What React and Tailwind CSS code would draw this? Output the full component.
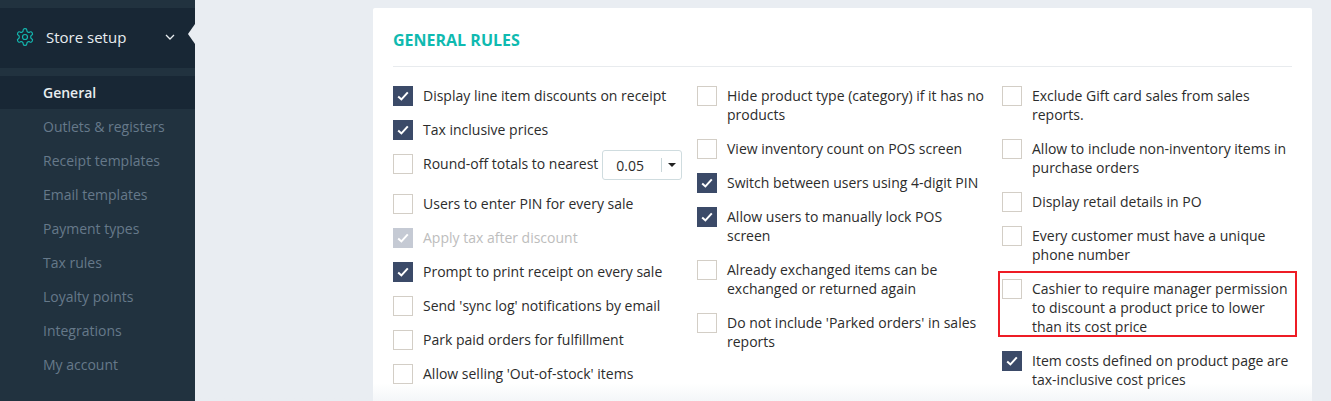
function Check() {
  return (
    <svg width="12" height="10" viewBox="0 0 12 10" fill="none">
      <path d="M1.2 5.4 L4.4 8.4 L10.8 1.4" stroke="#ffffff" strokeWidth="2" />
    </svg>
  );
}
function Item({ label, checked, disabled, className = "" }) {
  return (
    <div className={"flex items-start gap-[10px] " + className}>
      <div
        className={
          "w-5 h-5 shrink-0 flex items-center justify-center border " +
          (disabled
            ? "bg-[#c5cad4] border-[#c5cad4]"
            : checked
            ? "bg-[#3b4a68] border-[#3b4a68]"
            : "bg-white border-[#d3cec6]")
        }
      >
        {checked && <Check />}
      </div>
      <div className={"text-[14px] leading-[19px] pb-px " + (disabled ? "text-[#bdbdbd]" : "text-[#2c2c2c]")}>
        {label}
      </div>
    </div>
  );
}
const nav = ["Outlets & registers", "Receipt templates", "Email templates", "Payment types", "Tax rules", "Loyalty points", "Integrations", "My account"];
export default function App() {
  return (
    <div className="relative flex w-[1331px] h-[401px] overflow-hidden bg-[#e9edf2] font-['Open_Sans',sans-serif]">
      <aside className="w-[195px] shrink-0 bg-[#21323f] pt-2">
        <div className="relative h-[60px] bg-[#182735] flex items-center pl-[15px] pr-[19px] pb-[2px]">
          <svg width="20" height="20" viewBox="0 0 24 24" fill="none" stroke="#14b8b0" strokeWidth="1.4" strokeLinecap="round" strokeLinejoin="round" className="mr-[11px]">
            <path d="M12.22 2h-.44a2 2 0 0 0-2 2v.18a2 2 0 0 1-1 1.73l-.43.25a2 2 0 0 1-2 0l-.15-.08a2 2 0 0 0-2.73.73l-.22.38a2 2 0 0 0 .73 2.73l.15.1a2 2 0 0 1 1 1.72v.51a2 2 0 0 1-1 1.74l-.15.09a2 2 0 0 0-.73 2.73l.22.38a2 2 0 0 0 2.73.73l.15-.08a2 2 0 0 1 2 0l.43.25a2 2 0 0 1 1 1.73V20a2 2 0 0 0 2 2h.44a2 2 0 0 0 2-2v-.18a2 2 0 0 1 1-1.73l.43-.25a2 2 0 0 1 2 0l.15.08a2 2 0 0 0 2.73-.73l.22-.39a2 2 0 0 0-.73-2.73l-.15-.08a2 2 0 0 1-1-1.74v-.5a2 2 0 0 1 1-1.74l.15-.09a2 2 0 0 0 .73-2.73l-.22-.38a2 2 0 0 0-2.73-.73l-.15.08a2 2 0 0 1-2 0l-.43-.25a2 2 0 0 1-1-1.73V4a2 2 0 0 0-2-2z" />
            <circle cx="12" cy="12" r="3" />
          </svg>
          <span className="text-[15px] text-[#e8edf0] flex-1">Store setup</span>
          <svg width="10" height="7" viewBox="0 0 10 7" fill="none" stroke="#e8edf0" strokeWidth="1.3" className="-ml-[1px] mr-[1px]">
            <path d="M1 1 L5 5 L9 1" />
          </svg>
          <div className="absolute right-0 top-[16px] w-[7px] h-5 bg-[#e9edf2] [clip-path:polygon(100%_0,100%_100%,0_50%)]" />
        </div>
        <div className="h-[33px] mt-2 bg-[#182735] flex items-center pl-[43px] text-[14px] font-semibold text-[#e8edf0]">General</div>
        {nav.map((n) => (
          <div key={n} className="h-[34px] flex items-center pl-[43px] text-[14px] text-[#66798a]">{n}</div>
        ))}
      </aside>
      <main className="flex-1 pt-2 pl-[178px] pr-[19px]">
        <div className="bg-white rounded-[2px] h-[420px] px-[20px]">
          <div className="h-[59px] flex items-center pt-[6px] border-b border-[#e8ebee] text-[16px] font-bold text-[#0fbab0]">GENERAL RULES</div>
          <div className="flex pt-[19px]">
            <div className="w-[304px] flex flex-col">
              <Item checked label="Display line item discounts on receipt" />
              <Item checked label="Tax inclusive prices" className="mt-[14px]" />
              <div className="flex items-start gap-[10px] mt-[14px]">
                <div className="w-5 h-5 shrink-0 bg-white border border-[#d3cec6]" />
                <div className="text-[14px] leading-[19px] text-[#2c2c2c] whitespace-nowrap">Round-off totals to nearest</div>
                <div className="ml-[-6px] w-[80px] h-[30px] -mt-[4px] border border-[#cfdcdf] rounded-[3px] flex items-center text-[14px] text-[#2c2c2c] pl-[13px] bg-white">
                  <span className="w-[45px] pt-px">0.05</span>
                  <span className="w-px h-[14px] bg-[#c9d6d9]" />
                  <span className="ml-[6px] w-0 h-0 border-x-[4px] border-x-transparent border-t-[4px] border-t-[#222]" />
                </div>
              </div>
              <Item label="Users to enter PIN for every sale" className="mt-[14px]" />
              <Item checked disabled label="Apply tax after discount" className="mt-[14px]" />
              <Item checked label="Prompt to print receipt on every sale" className="mt-[14px]" />
              <Item label="Send 'sync log' notifications by email" className="mt-[14px]" />
              <Item label="Park paid orders for fulfillment" className="mt-[14px]" />
              <Item label="Allow selling 'Out-of-stock' items" className="mt-[14px]" />
            </div>
            <div className="w-[305px] flex flex-col gap-[14px] pr-[16px]">
              <Item label="Hide product type (category) if it has no products" />
              <Item label="View inventory count on POS screen" />
              <Item checked label="Switch between users using 4-digit PIN" />
              <Item checked label="Allow users to manually lock POS screen" />
              <Item label="Already exchanged items can be exchanged or returned again" />
              <Item label="Do not include 'Parked orders' in sales reports" />
            </div>
            <div className="w-[290px] flex flex-col gap-[14px]">
              <Item label="Exclude Gift card sales from sales reports." />
              <Item label="Allow to include non-inventory items in purchase orders" />
              <Item label="Display retail details in PO" />
              <Item label="Every customer must have a unique phone number" />
              <div className="relative">
                <Item label="Cashier to require manager permission to discount a product price to lower than its cost price" />
                <div className="absolute -left-[4px] -top-[8px] w-[299px] h-[66px] border-2 border-[#ee1c25]" />
              </div>
              <Item checked label="Item costs defined on product page are tax-inclusive cost prices" />
            </div>
          </div>
        </div>
      </main>
      <div className="absolute left-[195px] right-0 bottom-0 h-[18px] bg-gradient-to-b from-transparent to-[#e9edf2]/50" />
    </div>
  );
}
